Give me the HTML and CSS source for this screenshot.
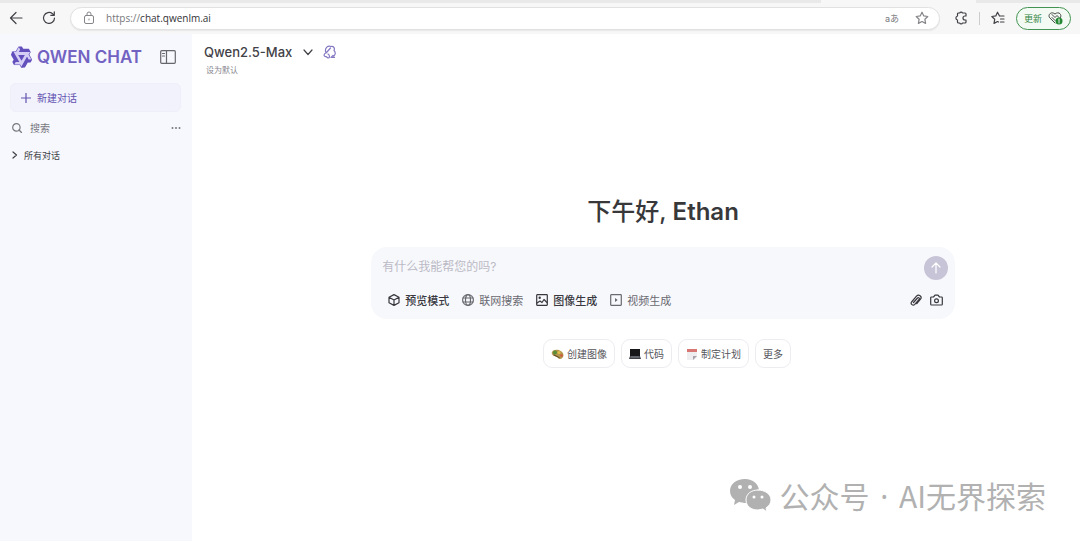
FILE: index.html
```html
<!DOCTYPE html>
<html lang="zh-CN">
<head>
<meta charset="utf-8">
<meta name="viewport" content="width=device-width, initial-scale=1">
<title>Qwen Chat</title>
<link rel="stylesheet" href="styles.css">
</head>
<body>
<header class="browser">
  <div class="tabline"><span class="tab-edge"></span></div>
  <div class="toolbar">
    <button class="icon-btn" aria-label="后退"><svg width="14" height="14" viewBox="0 0 14 14"><path d="M13 7H1.500M7 1.500 1.500 7 7 12.500"/></svg></button>
    <button class="icon-btn reload" aria-label="刷新"><svg width="14" height="14" viewBox="0 0 14 14"><path d="M12.500 7A5.500 5.500 0 1 1 10.500 2.700L12 4.200M12.300.8V4.300H8.800"/></svg></button>
    <div class="address">
      <svg class="lock" width="12" height="14" viewBox="0 0 12 14"><rect x="1.500" y="4.500" width="9" height="8" rx="1.500"/><path d="M4 4.500V3a2 2 0 0 1 4 0v1.500M6 8v1"/></svg>
      <label class="url"><span>https://</span><input aria-label="地址" value="chat.qwenlm.ai"></label>
      <button class="translate" aria-label="翻译">aあ</button>
      <button class="icon-btn muted" aria-label="收藏"><svg width="14" height="14" viewBox="0 0 14 14"><path d="m7 1.200 1.800 3.700 4 .6-2.900 2.800.7 4.100L7 10.500l-3.600 1.900.7-4.100L1.200 5.500l4-.6Z"/></svg></button>
    </div>
    <button class="icon-btn" aria-label="扩展"><svg width="14" height="14" viewBox="0 0 14 14"><path d="M4.500 2h1.200a1.500 1.500 0 0 1 2.800 0H11a1 1 0 0 1 1 1v2h-1a2 2 0 0 0 0 4h1v2a1 1 0 0 1-1 1H8.500a1.500 1.500 0 0 1-2.800 0H4.500a1 1 0 0 1-1-1V9a2.050 2.050 0 0 1 0-4V3a1 1 0 0 1 1-1Z"/></svg></button>
    <span class="divider"></span>
    <button class="icon-btn" aria-label="收藏夹"><svg width="14" height="14" viewBox="0 0 14 14"><path d="M8.500 5 6.500 1.200 4.800 4.900l-4 .6 2.900 2.800L3 12.400l3.500-1.900 1 .5M8.500 5H13M9.500 8H13M9.500 11H13"/></svg></button>
    <button class="update">更新 <svg width="15" height="14" viewBox="0 0 15 14"><path d="M7 12 1.700 6.800C-.5 4 3-.2 7 3c4-3.200 7.500 1 5.300 3.800M4 3.500l3 3 2-2 2 2M4 6.500l3 3"/><circle class="badge" cx="11" cy="10" r="3.500"/><path class="badge-mark" d="M11 8v2.500M11 11.500v.5"/></svg></button>
  </div>
</header>
<div class="app">
  <aside class="sidebar">
    <div class="brand">
      <svg class="logo" width="23" height="24" viewBox="0 0 24 24"><path class="logo-light" d="M9 1.500h3l1.500 2.500H20l1.500 3-1.500 3 2.800 5-1.600 3h-3L15 23h-3.500L10 20.500H4.500L3 18l1.500-3L1 9l2-3h3Z"/><path class="logo-dark" d="M12.604 1.340c.393.690.784 1.382 1.174 2.075a.18.18 0 00.157.091h5.552c.174 0 .322.110.446.327l1.454 2.570c.190.337.240.478.024.837-.260.430-.513.864-.760 1.300l-.367.658c-.106.196-.223.280-.040.512l2.652 4.637c.172.301.111.494-.043.770-.437.785-.882 1.564-1.335 2.340-.159.272-.352.375-.680.370-.777-.016-1.552-.010-2.327.016a.099.099 0 00-.081.050 575.097 575.097 0 01-2.705 4.740c-.169.293-.380.363-.725.364-.997.003-2.002.004-3.017.002a.537.537 0 01-.465-.271l-1.335-2.323a.09.09 0 00-.083-.049H4.982c-.285.030-.553-.001-.805-.092l-1.603-2.770a.543.543 0 01-.002-.540l1.207-2.120a.198.198 0 000-.197 550.951 550.951 0 01-1.875-3.272l-.790-1.395c-.160-.310-.173-.496.095-.965.465-.813.927-1.625 1.387-2.436.132-.234.304-.334.584-.335a338.3 338.3 0 012.589-.001.124.124 0 00.107-.063l2.806-4.895a.488.488 0 01.422-.246c.524-.001 1.053 0 1.583-.006L11.704 1c.341-.003.724.032.9.340zm-3.432.403a.06.06 0 00-.052.030L6.254 6.788a.157.157 0 01-.135.078H3.253c-.056 0-.070.025-.041.074l5.810 10.156c.025.042.013.062-.034.063l-2.795.015a.218.218 0 00-.200.116l-1.320 2.310c-.044.078-.021.118.068.118l5.716.008c.046 0 .080.020.104.061l1.403 2.454c.046.081.092.082.139 0l5.006-8.760.783-1.382a.055.055 0 01.096 0l1.424 2.530a.122.122 0 00.107.062l2.763-.020a.04.04 0 00.035-.020.041.041 0 000-.040l-2.900-5.086a.108.108 0 010-.113l.293-.507 1.120-1.977c.024-.041.012-.062-.035-.062H9.200c-.059 0-.073-.026-.043-.077l1.434-2.505a.107.107 0 000-.114L9.225 1.774a.06.06 0 00-.053-.031z"/><path class="logo-dark" d="M8.500 9.800h7l-3.500 6.100ZM1.500 6.500h2.200l6 10.700H7.500ZM17.500 12l1.500 2.500L13.500 23h-2Z"/></svg>
      <span class="wordmark">QWEN CHAT</span>
      <button class="icon-btn panel" aria-label="侧边栏"><svg width="16" height="14" viewBox="0 0 16 14"><rect x=".7" y=".7" width="14.600" height="12.600" rx="1"/><path d="M6.500 1v12M2.500 3.500h2M2.500 6h2"/></svg></button>
    </div>
    <button class="new-chat"><svg width="10" height="10" viewBox="0 0 10 10"><path d="M5 0v10M0 5h10"/></svg>新建对话</button>
    <div class="search">
      <svg width="10" height="10" viewBox="0 0 10 10"><circle cx="4.400" cy="4.400" r="3.700"/><path d="m7 7 2.500 2.500"/></svg>
      <input aria-label="搜索" placeholder="搜索">
      <button class="icon-btn" aria-label="更多选项"><svg class="dots" width="10" height="4" viewBox="0 0 10 4"><circle cx="1.500" cy="2" r="1"/><circle cx="5" cy="2" r="1"/><circle cx="8.500" cy="2" r="1"/></svg></button>
    </div>
    <button class="all-chats"><svg width="6" height="8" viewBox="0 0 6 8"><path d="m1 1 3.500 3L1 7"/></svg>所有对话</button>
  </aside>
  <main class="main">
    <div class="model">
      <button class="model-name">Qwen2.5-Max <svg width="10" height="7" viewBox="0 0 10 7"><path d="m1 1 4 4.500L9 1"/></svg></button>
      <button class="icon-btn spark" aria-label="模型信息"><svg width="13" height="14" viewBox="0 0 13 14"><path d="M3 8C1 3 5 0 8 1.500c3-.5 4 2 3 4 2 2 1.500 5-1 5.500M3 8c-3 1-2 4 0 3.500L5 13c2 0 2-3 0-4M3.500 7.500 7.500 3M8 12.500l2-2 1.500 2Z"/></svg></button>
    </div>
    <button class="default">设为默认</button>
    <section class="welcome">
      <h1>下午好, <span>Ethan</span></h1>
      <form class="composer">
        <div class="prompt">
          <input aria-label="消息" placeholder="有什么我能帮您的吗?">
          <button type="button" class="send" aria-label="发送"><svg width="12" height="12" viewBox="0 0 12 12"><path d="M6 11V1M2 5l4-4 4 4"/></svg></button>
        </div>
        <div class="tools">
          <button type="button" class="strong"><svg width="12" height="12" viewBox="0 0 12 12"><path d="m6 .6 5 2.700v5.400l-5 2.700-5-2.700V3.300ZM1 3.300 6 6l5-2.700M6 6v5.400"/></svg>预览模式</button>
          <button type="button"><svg width="12" height="12" viewBox="0 0 12 12"><circle cx="6" cy="6" r="5.400"/><ellipse cx="6" cy="6" rx="2.500" ry="5.400"/><path d="M1 4h10M1 8h10"/></svg>联网搜索</button>
          <button type="button" class="strong"><svg width="12" height="12" viewBox="0 0 12 12"><rect x=".7" y=".7" width="10.600" height="10.600" rx=".5"/><circle cx="3.700" cy="3.700" r=".6"/><path d="m1 9 3-2 2 1.500 2-3 3 3"/></svg>图像生成</button>
          <button type="button"><svg width="12" height="12" viewBox="0 0 12 12"><rect x=".7" y=".7" width="10.600" height="10.600" rx=".5"/><path d="M5 4v4l2.700-2Z" fill="currentColor" stroke="none"/></svg>视频生成</button>
          <button type="button" class="attach strong" aria-label="附件"><svg width="12" height="13" viewBox="0 0 12 13"><path d="m3.500 8.500 4-4.500c1-1 2.500.2 1.600 1.400l-4.300 5C3 12.200.1 10 1.600 8L6.500 2.200c2.200-2.500 6 .3 4 3L6.800 9.700"/></svg></button>
          <button type="button" class="strong" aria-label="相机"><svg width="13" height="12" viewBox="0 0 13 12"><path d="M1.500 3h2L5 1.200h3L9.500 3h2a.8.8 0 0 1 .8.800v6.400a.8.8 0 0 1-.8.800h-10a.8.8 0 0 1-.8-.8V3.800a.8.8 0 0 1 .8-.8Z"/><circle cx="6.500" cy="6.700" r="1.900"/></svg></button>
        </div>
      </form>
      <div class="chips">
        <button><svg width="13" height="12" viewBox="0 0 13 12"><path fill="#b3964c" stroke="none" d="M1 4C3 0 12 2 12.500 7c.2 3-3 5-5 3.500C7 9 6 9 5 8.500 2 8 0 6 1 4Z"/><circle cx="4" cy="4.500" r="2" fill="#598e38" stroke="none"/><circle cx="8" cy="4.500" r="1.500" fill="#e3bd4c" stroke="none"/><circle cx="10.500" cy="7.500" r="1.300" fill="#ce573e" stroke="none"/><path stroke="#67522b" d="m3 7 5 2.500"/></svg>创建图像</button>
        <button><svg width="12" height="12" viewBox="0 0 12 12"><path fill="#171719" stroke="none" d="M1 1h10v7H1z"/><path fill="#3e4147" stroke="none" d="M1 8h10l1 3H0z"/><path stroke="#85898f" d="M2 9h8"/></svg>代码</button>
        <button><svg width="12" height="12" viewBox="0 0 12 12"><path fill="#eeedf0" stroke="none" d="M1 1h10v8l-3 3H1z"/><path fill="#d77673" stroke="none" d="M1 1h10v3H1z"/><path fill="#aaa3ad" stroke="none" d="m11 8-4 4V8Z"/></svg>制定计划</button>
        <button>更多</button>
      </div>
    </section>
    <div class="watermark">
      <svg width="41" height="36" viewBox="0 0 41 36"><path d="M15 1C6 1 0 6 0 13c0 4 2 7 5 9l-1 5 5-3 6 1c8 0 14-5 14-12S23 1 15 1Z"/><path class="bubble-front" d="M28 12c-7 0-12 4-12 10s5 10 12 10l5-1 4 3-1-4c3-2 5-5 5-8 0-6-6-10-13-10Z"/><g class="eyes"><circle cx="10" cy="9" r="2"/><circle cx="20" cy="9" r="2"/><circle cx="24" cy="19" r="1.500"/><circle cx="32" cy="19" r="1.500"/></g></svg>
      <span>公众号 <span class="dot">·</span> AI无界探索</span>
    </div>
  </main>
</div>
</body>
</html>
```
FILE: styles.css
```css
* { box-sizing: border-box; }
body { margin: 0; min-height: 100vh; display: flex; flex-direction: column; background: #fff; color: #414147; font-family: Inter, "Noto Sans CJK SC", sans-serif; font-size: 10px; }
button, input { font: inherit; color: inherit; background: none; border: 0; padding: 0; margin: 0; }
input { min-width: 0; outline: 0; }
button { cursor: pointer; white-space: nowrap; }
svg { display: block; flex: none; fill: none; stroke: currentColor; stroke-width: 1.2; stroke-linecap: round; stroke-linejoin: round; }
.icon-btn { display: flex; flex: none; align-items: center; justify-content: center; }
.browser { background: #f7f7f7; }
.tabline { height: 3px; background: #e9e9e9; display: flex; justify-content: flex-end; }
.tab-edge { width: 24%; background: #f7f7f7; border-right: 104px solid #e9e9e9; }
.toolbar { height: 31px; display: flex; align-items: center; padding: 0 9px 1px 9px; }
.reload { margin-left: 19px; }
.address { flex: 1; height: 23px; margin: 0 14px; padding: 0 10px 0 12px; display: flex; align-items: center; background: #fff; border: 1px solid #e1e1e1; border-radius: 12px; box-shadow: 0 1px 1px #e8e8e8; }
.lock, .muted { color: #85858a; stroke-width: 1; }
.url { flex: 1; display: flex; margin-left: 11px; font-family: "Open Sans", sans-serif; font-size: 10px; color: #77777b; }
.url input { flex: 1; color: #333336; }
.translate { margin-right: 16px; color: #77777b; font-size: 9px; }
.divider { width: 1px; height: 13px; margin: 0 11px; background: #ccc; }
.update { display: flex; align-items: center; justify-content: center; gap: 6px; width: 55px; height: 23px; margin-left: 11px; border: 1px solid #439453; border-radius: 12px; background: #f3f9f3; color: #348843; font-size: 9px; }
.update svg { color: #454947; stroke-width: 1; }
.badge { fill: #238832; stroke: none; }
.badge-mark { stroke: #fff; }
.app { flex: 1; display: flex; }
.sidebar { flex: none; width: 192px; padding: 10px 11px 0 10px; background: #f7f8fd; }
.brand { display: flex; align-items: center; height: 26px; padding-right: 5px; }
.logo-light { fill: #d5cff5; stroke: none; }
.logo-dark { fill: #6350bd; stroke: none; }
.wordmark { flex: 1; margin-left: 4px; font-family: Inter, sans-serif; font-size: 17px; font-weight: 600; color: #7263c2; white-space: nowrap; }
.panel { color: #66666d; }
.new-chat { display: flex; align-items: center; gap: 6px; width: 100%; height: 29px; margin-top: 13px; padding-left: 10px; border: 1px solid #efeffa; border-radius: 6px; background: #f2f2fd; color: #6253b0; }
.search { display: flex; align-items: center; height: 18px; margin-top: 7px; padding-left: 2px; color: #77777f; }
.search input { flex: 1; margin-left: 8px; }
.search input::placeholder { color: #77777f; opacity: 1; }
.dots { fill: currentColor; stroke: none; }
.all-chats { display: flex; align-items: center; gap: 6px; height: 18px; margin-top: 9px; padding-left: 2px; font-size: 9px; }
.main { flex: 1; min-width: 0; display: flex; flex-direction: column; }
.model { display: flex; align-items: center; gap: 10px; height: 20px; margin: 8px 0 0 12px; }
.model-name { display: flex; align-items: center; gap: 11px; font-size: 13px; font-weight: 500; }
.spark { color: #8579c2; stroke-width: 1; }
.default { align-self: flex-start; height: 12px; margin: 2px 0 0 14px; color: #86868e; font-size: 8px; line-height: 12px; }
.welcome { align-self: center; width: calc(70% - 38px); margin: 119px 0 0 54px; }
h1 { margin: 0; text-align: center; font-size: 24px; line-height: 34px; font-weight: 500; color: #38383a; }
h1 span { font-weight: 600; }
.composer { margin-top: 18px; padding: 9px 7px 9px 11px; border-radius: 16px; background: #f7f8fc; }
.prompt { display: flex; align-items: flex-start; }
.prompt input { flex: 1; height: 20px; font-size: 12px; }
.prompt input::placeholder { color: #bbbac5; opacity: 1; }
.send { display: flex; align-items: center; justify-content: center; width: 24px; height: 24px; border-radius: 50%; background: #c8c4d7; color: #fff; }
.tools { display: flex; gap: 13px; height: 20px; margin-top: 10px; padding: 0 5px 0 6px; color: #696970; font-size: 11px; }
.tools button { display: flex; align-items: center; gap: 5px; }
.tools .strong { color: #38383e; font-weight: 500; }
.tools .attach { margin-left: auto; margin-right: -5px; }
.chips { display: flex; justify-content: center; gap: 6px; margin: 20px 0 0 8px; }
.chips button { display: flex; align-items: center; gap: 3px; height: 29px; padding: 0 7px; border: 1px solid #ededf1; border-radius: 9px; background: #fff; color: #55555b; }
.watermark { display: flex; align-items: center; gap: 8px; margin: auto 34px 21px auto; color: #b1b1b1; font-size: 30px; line-height: 46px; font-family: "Noto Sans CJK SC", sans-serif; font-weight: 400; white-space: nowrap; }
.watermark svg { fill: #b1b1b1; stroke: none; }
.watermark .dot { margin: 0 4px; font-family: "Noto Sans", sans-serif; }
.watermark .bubble-front { stroke: #fff; stroke-width: 1; }
.watermark .eyes { fill: #fff; }
```
